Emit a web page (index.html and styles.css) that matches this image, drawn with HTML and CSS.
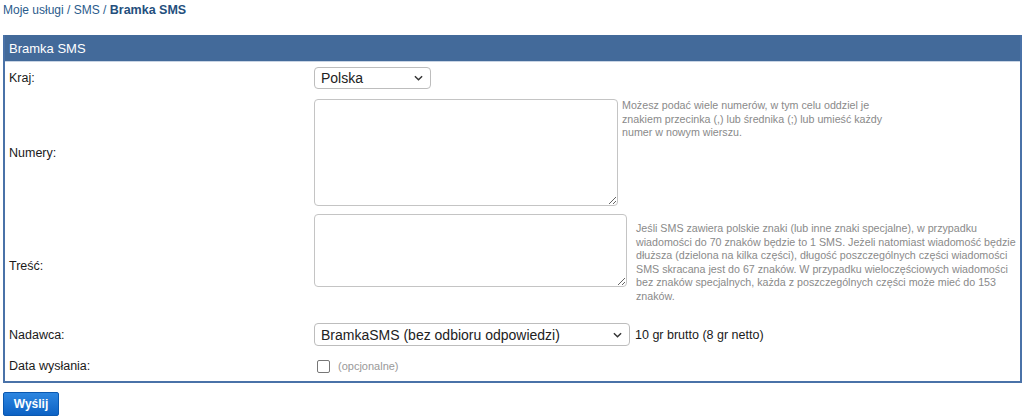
FILE: index.html
```html
<!DOCTYPE html>
<html lang="pl">
<head>
<meta charset="utf-8">
<title>Bramka SMS</title>
<link rel="stylesheet" href="styles.css">
</head>
<body>
<div class="crumbs"><a href="#">Moje usługi</a> / <a href="#">SMS</a> / <b>Bramka SMS</b></div>
<div class="box">
  <div class="box-head">Bramka SMS</div>
  <div class="form">
    <div class="row row-kraj">
      <div class="label">Kraj:</div>
      <div class="field">
        <div class="select sel-kraj"><span>Polska</span><svg class="chev" viewBox="0 0 10 6" width="9" height="6"><path d="M1 1l4 4 4-4" fill="none" stroke="#333" stroke-width="1.6"/></svg></div>
      </div>
    </div>
    <div class="row row-num">
      <div class="label">Numery:</div>
      <div class="field">
        <textarea class="ta ta-num"></textarea>
        <div class="help help-num">Możesz podać wiele numerów, w tym celu oddziel je znakiem przecinka (,) lub średnika (;) lub umieść każdy numer w nowym wierszu.</div>
      </div>
    </div>
    <div class="row row-tresc">
      <div class="label label-tresc">Treść:</div>
      <div class="field">
        <textarea class="ta ta-tresc"></textarea>
        <div class="help help-tresc">Jeśli SMS zawiera polskie znaki (lub inne znaki specjalne), w przypadku wiadomości do 70 znaków będzie to 1 SMS. Jeżeli natomiast wiadomość będzie dłuższa (dzielona na kilka części), długość poszczególnych części wiadomości SMS skracana jest do 67 znaków. W przypadku wieloczęściowych wiadomości bez znaków specjalnych, każda z poszczególnych części może mieć do 153 znaków.</div>
      </div>
    </div>
    <div class="row row-nad">
      <div class="label">Nadawca:</div>
      <div class="field field-center">
        <div class="select sel-nad"><span>BramkaSMS (bez odbioru odpowiedzi)</span><svg class="chev" viewBox="0 0 10 6" width="9" height="6"><path d="M1 1l4 4 4-4" fill="none" stroke="#333" stroke-width="1.6"/></svg></div>
        <span class="price">10 gr brutto (8 gr netto)</span>
      </div>
    </div>
    <div class="row row-data">
      <div class="label">Data wysłania:</div>
      <div class="field field-center">
        <span class="cb"></span>
        <span class="opt">(opcjonalne)</span>
      </div>
    </div>
  </div>
</div>
<button class="btn" type="button">Wyślij</button>
</body>
</html>
```
FILE: styles.css
```css
html, body { margin: 0; padding: 0; background: #fff; }
body {
  padding: 0 2px 0 3px;
  font-family: "Liberation Sans", Arial, sans-serif;
  font-size: 12px;
  color: #1a1a1a;
}
.crumbs {
  font-size: 12px;
  color: #2a5b8c;
  line-height: 16px;
  padding-top: 2px;
  height: 33px;
}
.crumbs a { color: #2a5b8c; text-decoration: none; }
.crumbs b { color: #244f7d; font-size: 12.5px; }
.box {
  border: 2px solid #4a72a8;
  border-top: 0;
  width: 1015px;
}
.box-head {
  background: #436a9a;
  color: #fff;
  font-size: 13px;
  height: 26px;
  line-height: 28px;
  padding-left: 4px;
  border-bottom: 1px solid #c8d4e4;
}
.form { padding: 0 4px; }
.row { display: flex; align-items: center; }
.label { width: 305px; flex: none; font-size: 12.5px; color: #1a1a1a; }
.label-tresc { margin-top: 14px; }
.field { display: flex; align-items: flex-start; }
.field-center { align-items: center; }
.row-kraj { padding: 5px 0 4px; }
.row-num { padding: 6px 0 4px; }
.row-tresc { padding: 4px 0 17px; }
.row-nad { padding: 3px 0 3px; }
.row-data { padding: 10px 0 8px; }
.select {
  box-sizing: border-box;
  display: flex;
  align-items: center;
  justify-content: space-between;
  border: 1px solid #bdbdbd;
  border-radius: 4px;
  background: #fff;
  font-size: 14px;
  color: #222;
  padding: 0 7px 0 6px;
}
.sel-kraj { width: 117px; height: 22px; }
.sel-nad { width: 316px; height: 23px; }
.chev { display: block; }
.ta {
  box-sizing: border-box;
  margin: 0;
  border: 1px solid #c4c4c4;
  border-radius: 4px;
  background: #fff;
  resize: both;
  font-family: inherit;
}
.ta-num { width: 304px; height: 107px; }
.ta-tresc { width: 313px; height: 73px; }
.help {
  font-size: 10.7px;
  line-height: 13.5px;
  color: #8a8a8a;
}
.help-num { width: 270px; margin-left: 4px; margin-top: 0; }
.help-tresc { width: 382px; margin-left: 9px; margin-top: 8px; }
.price { margin-left: 5px; font-size: 12.5px; color: #1a1a1a; }
.cb {
  box-sizing: border-box;
  width: 13px;
  height: 13px;
  border: 1px solid #777;
  border-radius: 2px;
  margin-left: 3px;
  background: #fff;
}
.opt { margin-left: 8px; font-size: 11px; color: #999; }
.btn {
  margin-top: 9px;
  width: 56px;
  height: 24px;
  border: 1px solid #0a58b0;
  border-radius: 2px;
  background: linear-gradient(#2d86e0, #0d62c4);
  color: #fff;
  font-family: "Liberation Sans", Arial, sans-serif;
  font-size: 12px;
  font-weight: bold;
  padding: 0;
}
```
